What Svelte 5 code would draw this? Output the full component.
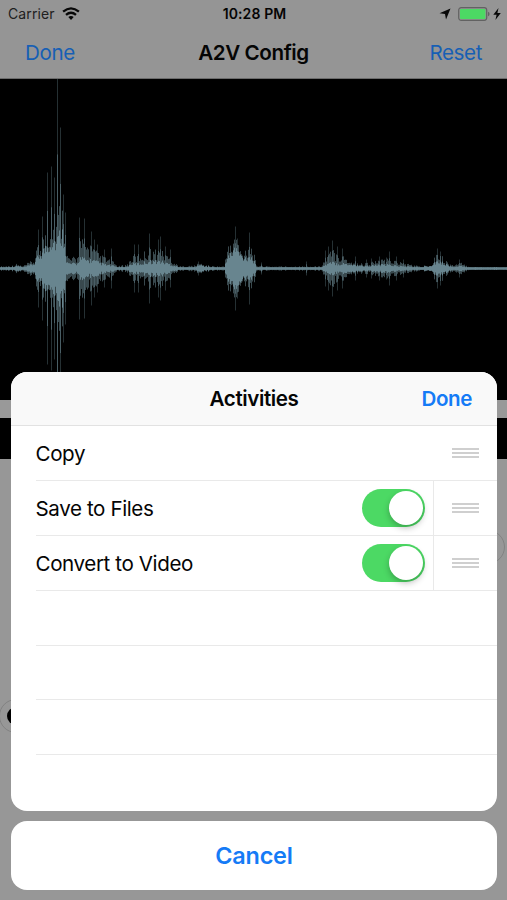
<script>
	// x, solid half height, faint half height
	const envelope = [
		[0, 1, 3], [12, 1.5, 4], [16, 2, 6], [19, 2, 5], [22, 1, 3], [27, 2, 7], [34, 4, 12],
		[37, 9, 28], [43, 15, 42], [48, 20, 56], [52, 25, 74], [56, 22, 74],
		[60, 30, 92], [64, 28, 72], [66, 5, 20], [70, 4, 14], [77, 4, 16],
		[79, 9, 42], [86, 7, 34], [91, 7, 32], [98, 5, 20], [106, 3, 14],
		[114, 2, 8], [118, 1, 3], [127, 1.5, 6], [131, 4, 15], [140, 4, 19],
		[148, 6, 26], [160, 6, 25], [168, 4, 17], [175, 2, 7], [180, 1, 3],
		[195, 1, 4], [198, 3, 8], [204, 2, 5], [214, 1, 3], [224, 1, 3],
		[226, 8, 30], [231, 12, 32], [234, 17, 46], [238, 14, 38],
		[241, 10, 22], [246, 9, 30], [249, 11, 38], [253, 7, 24],
		[256, 1, 4], [261, 1.5, 5], [264, 1, 3], [320, 1, 3], [325, 3, 14],
		[332, 5, 26], [338, 4, 20], [346, 4, 15], [353, 3, 8], [364, 2, 7],
		[380, 3, 11], [390, 3, 13], [399, 2, 9], [412, 1.5, 5], [421, 1, 3],
		[431, 3, 6], [436, 6, 23], [441, 5, 17], [447, 3, 9], [451, 1.5, 5],
		[456, 1.5, 6], [460, 2, 8], [467, 1, 3], [475, 1, 2], [507, 1, 1]
	]

	const peaks = [
		[38, 39], [42, 52], [47, 96], [51, 102], [54, 91], [57, 190], [60, 141],
		[63, 74], [65, 56], [79, 51], [84, 50], [91, 37], [94, 29], [97, 24],
		[104, 19], [111, 20], [134, 24], [138, 24], [149, 35], [158, 29],
		[160, 32], [165, 22], [170, 19], [198, 7], [235, 42], [237, 30],
		[249, 36], [261, 6], [306, 7], [325, 18], [328, 22], [332, 28],
		[337, 22], [342, 20], [355, 12], [366, 9], [371, 10], [379, 12],
		[386, 11], [389, 17], [396, 12], [403, 9], [437, 20], [440, 17],
		[459, 9]
	]

	const center = 189.5
	let solid = "", faint = "", tall = ""

	function bar(x, h) {
		return `M${x + 0.5} ${center - h}V${center + h}`
	}

	for (let x = 0; x < 507; x++) {
		let i = 0
		while (i < envelope.length - 2 && envelope[i + 1][0] <= x) i++
		const a = envelope[i]
		const b = envelope[i + 1]
		const t = (x - a[0]) / (b[0] - a[0])
		const wobble = Math.abs(Math.sin(x * 12.9898) * 43758.5453) % 1
		const inner = a[1] + (b[1] - a[1]) * t
		const outer = a[2] + (b[2] - a[2]) * t
		solid += bar(x, Math.max(1.3, inner * (0.7 + wobble * 0.8)))
		faint += bar(x, outer * (0.3 + wobble * 0.5))
	}
	for (const [x, h] of peaks) {
		tall += bar(x, h)
		faint += bar(x, h * 0.6)
	}

	let activities = [
		{name: "Copy", toggle: false, on: true},
		{name: "Save to Files", toggle: true, on: true},
		{name: "Convert to Video", toggle: true, on: true}
	]
</script>

<main>
	<div class="bar">
		<div class="status">
			<div class="carrier">
				<span>Carrier</span>
				<svg width="18" height="14" viewBox="0 0 18 14" fill="none" stroke="#080808" stroke-width="2.3">
					<path d="M1.1 4.7Q9-2 16.9 4.7" />
					<path d="M4 7.9Q9 3.6 14 7.9" />
					<path d="M6.3 10.1Q9 8 11.7 10.1L9 13Z" fill="#080808" stroke="none" />
				</svg>
			</div>
			<span class="time">10:28 PM</span>
			<div class="power">
				<svg width="12" height="12" viewBox="0 0 12 12"><path d="M11.5.5L7 11.5 6 6 .5 5.2Z" fill="#080808" /></svg>
				<svg class="battery" width="32" height="14" viewBox="0 0 32 14">
					<rect x=".7" y=".7" width="28" height="12.6" rx="2.5" fill="none" stroke="#626262" stroke-width="1.2" />
					<rect x="2" y="2" width="25.4" height="10" rx="1" fill="#4cd964" />
					<path d="M30 4.8q1.6.5 1.6 2.2T30 9.2Z" fill="#626262" />
				</svg>
				<svg width="8" height="12" viewBox="0 0 8 12"><path d="M5.5 0L.3 6.8H3.6L2.4 12 7.8 4.9H4.4Z" fill="#080808" /></svg>
			</div>
		</div>
		<div class="nav">
			<span class="link">Done</span>
			<span class="title">A2V Config</span>
			<span class="link reset">Reset</span>
		</div>
	</div>
	<div class="wave">
		<svg width="507" height="321" viewBox="0 0 507 321" stroke="#68858f">
			<path d={tall} opacity=".36" />
			<path d={faint} opacity=".55" />
			<path d={solid} />
		</svg>
	</div>
	<div class="strip"></div>
	<div class="black"></div>
	<div class="knob right"></div>
	<div class="knob left"><i></i></div>

	<div class="overlay">
		<div class="sheet">
			<div class="head">
				<span class="heading">Activities</span>
				<span class="done">Done</span>
			</div>
			{#each activities as a}
				<div class="row">
					<span class="name">{a.name}</span>
					{#if a.toggle}
						<button class="switch" class:on={a.on} aria-label={a.name} on:click={() => a.on = !a.on}><i></i></button>
					{/if}
					<div class="grip" class:divided={a.toggle}>
						<b></b><b></b><b></b>
					</div>
				</div>
			{/each}
			<div class="row"></div>
			<div class="row"></div>
			<div class="row"></div>
		</div>
		<div class="cancel">Cancel</div>
	</div>
</main>

<style>
	:global(body) {
		margin:0;
		overflow:hidden;
	}
	main {
		position:relative;
		width:507px;
		height:900px;
		overflow:hidden;
		background:#979797;
		color:#050505;
		font-family:Inter,"Liberation Sans",sans-serif;
		font-size:20.6px;
		letter-spacing:-0.4px;
	}
	svg {
		display:block;
	}
	.bar {
		height:79px;
		box-sizing:border-box;
		background:#959595;
		border-bottom:1px solid #6b6b6b;
	}
	.status {
		height:27px;
		display:grid;
		grid-template-columns:1fr auto 1fr;
		align-items:center;
		padding:0 6px 0 8px;
		font-size:14px;
		letter-spacing:0.1px;
	}
	.carrier, .power {
		display:flex;
		align-items:center;
	}
	.carrier {
		gap:7px;
		color:#202020;
	}
	.time {
		font-weight:600;
	}
	.power {
		justify-content:flex-end;
	}
	.battery {
		margin:0 3px 0 7px;
	}
	.nav {
		height:50px;
		display:grid;
		grid-template-columns:1fr auto 1fr;
		align-items:center;
		padding:0 25px;
	}
	.title, .heading {
		font-weight:600;
	}
	.link {
		color:#175fb4;
	}
	.reset {
		text-align:right;
	}
	.wave {
		height:321px;
		background:#000;
	}
	.strip {
		height:18px;
		background:#999;
	}
	.black {
		height:41px;
		background:#000;
	}
	.knob {
		position:absolute;
		box-sizing:border-box;
		width:34px;
		height:34px;
		border:1px solid #828282;
		border-radius:50%;
	}
	.right {
		left:471px;
		top:530px;
	}
	.left {
		left:-1px;
		top:699px;
	}
	.left i {
		display:block;
		width:18px;
		height:18px;
		margin:7px;
		border-radius:50%;
		background:#000;
	}
	.overlay {
		position:absolute;
		left:11px;
		right:10px;
		top:372px;
		display:flex;
		flex-direction:column;
		gap:10px;
	}
	.sheet {
		height:439px;
		border-radius:16px;
		background:#fff;
		overflow:hidden;
	}
	.head {
		height:54px;
		box-sizing:border-box;
		display:grid;
		grid-template-columns:1fr auto 1fr;
		align-items:center;
		padding:0 25px;
		background:#f9f9f9;
		border-bottom:1px solid #e2e2e2;
	}
	.heading {
		grid-column:2;
	}
	.done {
		text-align:right;
		font-weight:600;
		color:#157bf6;
	}
	.row {
		height:54.9px;
		box-sizing:border-box;
		margin-left:25px;
		display:flex;
		align-items:center;
		border-bottom:1px solid #e9e9e9;
	}
	.name {
		flex:1;
		margin-left:-0.5px;
		padding-top:1px;
	}
	.switch {
		width:63px;
		height:38px;
		padding:2px;
		margin-right:8px;
		border:none;
		border-radius:19px;
		background:#ddd;
	}
	.switch i {
		display:block;
		width:34px;
		height:34px;
		border-radius:50%;
		background:#fff;
		box-shadow:0 3px 6px rgba(0,0,0,0.25);
	}
	.on {
		background:#4cd964;
	}
	.on i {
		margin-left:25px;
	}
	.grip {
		width:64px;
		height:100%;
		box-sizing:border-box;
		display:flex;
		flex-direction:column;
		justify-content:center;
		gap:2px;
		padding-left:18px;
		border-left:1px solid transparent;
	}
	.divided {
		border-color:#e9e9e9;
	}
	.grip b {
		width:27px;
		height:2px;
		background:#cfcfcf;
	}
	.cancel {
		height:69px;
		display:flex;
		align-items:center;
		justify-content:center;
		border-radius:16px;
		background:#fff;
		color:#157bf6;
		font-size:23.4px;
		font-weight:600;
		letter-spacing:-0.2px;
	}
</style>
